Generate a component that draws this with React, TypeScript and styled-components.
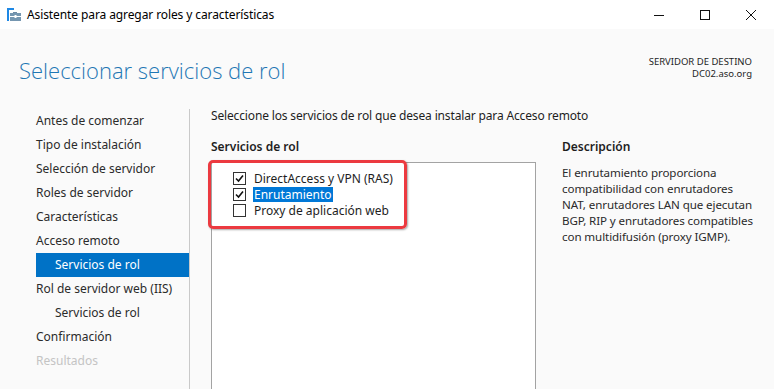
import React from "react";
import styled, { createGlobalStyle } from "styled-components";

const GlobalStyle = createGlobalStyle`
  html, body {
    margin: 0;
    padding: 0;
    background: #fafafa;
  }
  body {
    font-family: "Noto Sans", "Open Sans", Arial, sans-serif;
    font-size: 12px;
    color: #1e1e1e;
    overflow: hidden;
  }
`;

const Window = styled.div`
  width: 774px;
  height: 389px;
  display: flex;
  flex-direction: column;
  background: #fafafa;
  overflow: hidden;
`;

const TitleBar = styled.div`
  height: 29px;
  display: flex;
  align-items: center;
  background: #ffffff;
  padding-left: 7px;
  box-sizing: border-box;
`;

const TitleText = styled.span`
  margin-left: 6px;
  font-size: 12px;
  color: #000;
  flex: 1;
  letter-spacing: -0.1px;
`;

const Controls = styled.div`
  display: flex;
  height: 100%;
`;

const ControlButton = styled.div`
  width: 46px;
  height: 100%;
  display: flex;
  align-items: center;
  justify-content: center;
`;

const Header = styled.div`
  display: flex;
  justify-content: space-between;
  align-items: flex-start;
  padding: 26px 22px 0 19px;
  height: 80px;
  box-sizing: border-box;
`;

const PageTitle = styled.h1`
  margin: 0;
  font-family: "Open Sans", "Noto Sans", sans-serif;
  font-weight: 300;
  font-size: 22px;
  color: #1f77b4;
  line-height: 30px;
`;

const Destination = styled.div`
  text-align: right;
  font-size: 9.5px;
  line-height: 12px;
  color: #1e1e1e;
  padding-top: 1px;
`;

const Body = styled.div`
  flex: 1;
  display: flex;
  min-height: 0;
`;

const Nav = styled.nav`
  width: 190px;
  border-right: 1px solid #c9c9c9;
  box-sizing: border-box;
  display: flex;
  flex-direction: column;
`;

const NavItem = styled.div<{ $sub?: boolean; $active?: boolean; $disabled?: boolean }>`
  height: 24px;
  line-height: 24px;
  margin-left: 36px;
  padding-left: ${(p) => (p.$sub ? "19px" : "0")};
  background: ${(p) => (p.$active ? "#0072c6" : "transparent")};
  color: ${(p) => (p.$active ? "#fff" : p.$disabled ? "#c4c4c4" : "#2b2b2b")};
  white-space: nowrap;
`;

const Main = styled.div`
  flex: 1;
  padding-left: 21px;
  display: flex;
  flex-direction: column;
`;

const Intro = styled.div`
  height: 16px;
  line-height: 16px;
  margin-top: -1px;
  letter-spacing: -0.15px;
`;

const Columns = styled.div`
  flex: 1;
  display: flex;
  margin-top: 15px;
  gap: 26px;
`;

const ListColumn = styled.div`
  width: 325px;
  display: flex;
  flex-direction: column;
`;

const SectionLabel = styled.div<{ $gap: number }>`
  font-weight: 600;
  height: 16px;
  line-height: 16px;
  margin-bottom: ${(p) => p.$gap}px;
`;

const ListBox = styled.div`
  position: relative;
  flex: 1;
  background: #fff;
  border: 1px solid #a3a3a3;
  border-bottom: none;
  padding: 7px 0 0 21px;
`;

const CheckRow = styled.label`
  display: flex;
  align-items: center;
  height: 16px;
  gap: 7px;
`;

const Box = styled.span`
  width: 11px;
  height: 11px;
  border: 1px solid #333;
  background: #fff;
  display: flex;
  align-items: center;
  justify-content: center;
`;

const CheckLabel = styled.span<{ $selected?: boolean }>`
  line-height: 15px;
  padding: 0 1px;
  background: ${(p) => (p.$selected ? "#0078d7" : "transparent")};
  color: ${(p) => (p.$selected ? "#fff" : "#1e1e1e")};
`;

const Callout = styled.div`
  position: absolute;
  left: -4px;
  top: -3px;
  width: 193px;
  height: 63px;
  border: 3px solid #ec3a40;
  border-radius: 5px;
  box-shadow: 1px 1px 2px rgba(0, 0, 0, 0.35);
  pointer-events: none;
`;

const DescColumn = styled.div`
  width: 212px;
  display: flex;
  flex-direction: column;
`;

const DescText = styled.p`
  margin: 0;
  line-height: 16px;
  font-size: 11.6px;
  color: #2b2b2b;
  white-space: nowrap;
  letter-spacing: -0.1px;
`;

const AppIcon = () => (
  <svg width="14" height="14" viewBox="0 0 14 14">
    <rect x="0" y="0" width="7" height="2" fill="#1e88e5" />
    <rect x="0" y="0" width="2" height="13" fill="#1e88e5" />
    <rect x="6" y="4" width="4" height="2" fill="#6d8aa3" />
    <rect x="3" y="5" width="11" height="8" fill="#7596b0" />
    <rect x="3" y="8" width="11" height="1" fill="#fff" />
    <rect x="7.5" y="7" width="2" height="3" fill="#fff" />
  </svg>
);

const CheckMark = () => (
  <svg width="9" height="9" viewBox="0 0 9 9">
    <path d="M1 4.5 L3.5 7 L8 1.5" stroke="#111" strokeWidth="1.6" fill="none" />
  </svg>
);

const navItems = [
  { label: "Antes de comenzar" },
  { label: "Tipo de instalación" },
  { label: "Selección de servidor" },
  { label: "Roles de servidor" },
  { label: "Características" },
  { label: "Acceso remoto" },
  { label: "Servicios de rol", sub: true, active: true },
  { label: "Rol de servidor web (IIS)" },
  { label: "Servicios de rol", sub: true },
  { label: "Confirmación" },
  { label: "Resultados", disabled: true },
];

const services = [
  { label: "DirectAccess y VPN (RAS)", checked: true },
  { label: "Enrutamiento", checked: true, selected: true },
  { label: "Proxy de aplicación web", checked: false },
];

const descLines = [
  "El enrutamiento proporciona",
  "compatibilidad con enrutadores",
  "NAT, enrutadores LAN que ejecutan",
  "BGP, RIP y enrutadores compatibles",
  "con multidifusión (proxy IGMP).",
];

export default function App() {
  return (
    <Window>
      <GlobalStyle />
      <TitleBar>
        <AppIcon />
        <TitleText>Asistente para agregar roles y características</TitleText>
        <Controls>
          <ControlButton>
            <svg width="10" height="10" viewBox="0 0 10 10">
              <path d="M0 5.5 H10" stroke="#111" strokeWidth="1" />
            </svg>
          </ControlButton>
          <ControlButton>
            <svg width="10" height="10" viewBox="0 0 10 10">
              <rect x="0.5" y="0.5" width="9" height="9" stroke="#111" fill="none" />
            </svg>
          </ControlButton>
          <ControlButton>
            <svg width="10" height="10" viewBox="0 0 10 10">
              <path d="M0 0 L10 10 M10 0 L0 10" stroke="#111" strokeWidth="1" />
            </svg>
          </ControlButton>
        </Controls>
      </TitleBar>
      <Header>
        <PageTitle>Seleccionar servicios de rol</PageTitle>
        <Destination>
          SERVIDOR DE DESTINO
          <br />
          DC02.aso.org
        </Destination>
      </Header>
      <Body>
        <Nav>
          {navItems.map((item, i) => (
            <NavItem key={i} $sub={item.sub} $active={item.active} $disabled={item.disabled}>
              {item.label}
            </NavItem>
          ))}
        </Nav>
        <Main>
          <Intro>Seleccione los servicios de rol que desea instalar para Acceso remoto</Intro>
          <Columns>
            <ListColumn>
              <SectionLabel $gap={7}>Servicios de rol</SectionLabel>
              <ListBox>
                {services.map((s) => (
                  <CheckRow key={s.label}>
                    <Box>{s.checked && <CheckMark />}</Box>
                    <CheckLabel $selected={s.selected}>{s.label}</CheckLabel>
                  </CheckRow>
                ))}
                <Callout />
              </ListBox>
            </ListColumn>
            <DescColumn>
              <SectionLabel $gap={10}>Descripción</SectionLabel>
              <DescText>
                {descLines.map((line, i) => (
                  <React.Fragment key={i}>
                    {line}
                    {i < descLines.length - 1 && <br />}
                  </React.Fragment>
                ))}
              </DescText>
            </DescColumn>
          </Columns>
        </Main>
      </Body>
    </Window>
  );
}
